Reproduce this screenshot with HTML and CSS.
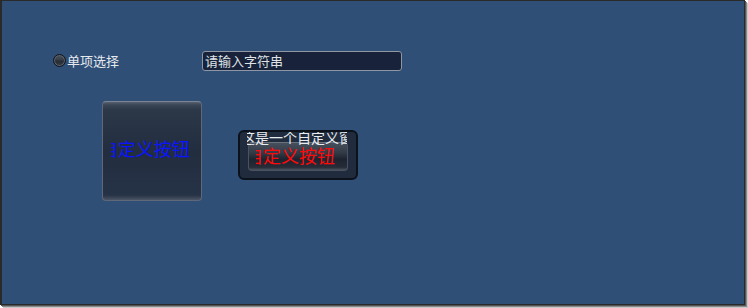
FILE: index.html
```html
<!DOCTYPE html>
<html lang="zh">
<head>
<meta charset="utf-8">
<link rel="stylesheet" href="styles.css">
</head>
<body>
<div class="window">
  <div class="row1">
    <label class="radio-group">
      <span class="radio"></span>
      <span class="radio-label">单项选择</span>
    </label>
    <div class="input"><span class="input-text">请输入字符串</span></div>
  </div>
  <div class="row2">
    <div class="btn1">
      <span class="clip1"><span class="clip1-text">自定义按钮</span></span>
    </div>
    <div class="win2">
      <div class="win2-title"><span class="win2-title-text">这是一个自定义窗口</span></div>
      <div class="btn2">
        <span class="clip2"><span class="clip2-text">自定义按钮</span></span>
      </div>
    </div>
  </div>
</div>
</body>
</html>
```
FILE: styles.css
```css
html, body {
  margin: 0;
  padding: 0;
  background: #ffffff;
}
body {
  font-family: "Noto Sans CJK SC", "Noto Sans", sans-serif;
  width: 748px;
  height: 308px;
  overflow: hidden;
}
.window {
  box-sizing: border-box;
  width: 745px;
  height: 305px;
  background: #2f4f77;
  border-top: 1px solid #2a2a2a;
  border-left: 2px solid #2a2a2a;
  border-right: 1px solid #2a2a2a;
  border-bottom: 1px solid #2a2a2a;
  box-shadow: 1px 1px 0 #555555, 2px 2px 0 #8a8a8a, 3px 3px 0 #c8c8c8;
}
.row1 {
  display: flex;
  align-items: center;
  height: 19px;
  margin-top: 50px;
  padding-left: 51px;
}
.radio-group {
  display: flex;
  align-items: center;
  width: 149px;
}
.radio {
  box-sizing: border-box;
  width: 13px;
  height: 13px;
  border-radius: 50%;
  border: 1px solid #10151d;
  background: linear-gradient(#4c535d 0%, #363c45 45%, #272c34 55%, #343a43 100%);
  box-shadow: inset 0 0 0 1px #5a616b;
}
.radio-label {
  margin-left: 1px;
  font-size: 13px;
  line-height: 19px;
  color: #e6e9ee;
}
.input {
  box-sizing: border-box;
  width: 200px;
  height: 20px;
  border: 1px solid #8e97a3;
  border-radius: 3px;
  background: #18223a;
  padding-left: 2px;
  display: flex;
  align-items: center;
}
.input-text {
  font-size: 13px;
  line-height: 18px;
  color: #dfe2e7;
}
.row2 {
  display: flex;
  align-items: flex-start;
  margin-top: 31px;
  padding-left: 100px;
}
.btn1 {
  box-sizing: border-box;
  width: 100px;
  height: 100px;
  border: 1px solid #5e6878;
  border-top-color: #7a8494;
  border-radius: 4px;
  background: linear-gradient(#56606e 0px, #3a4556 3px, #2c3748 8px, #222d3f 50%, #263246 95%, #4a5464 100%);
  display: flex;
  align-items: center;
  padding-left: 8px;
  padding-bottom: 6px;
}
.clip1 {
  display: block;
  width: 82px;
  overflow: hidden;
  white-space: nowrap;
}
.clip1-text {
  display: block;
  margin-left: -11px;
  font-size: 18px;
  line-height: 22px;
  color: #0a14ff;
}
.win2 {
  box-sizing: border-box;
  width: 120px;
  height: 50px;
  margin-left: 36px;
  margin-top: 29px;
  border: 2px solid #0c121c;
  border-radius: 6px;
  background: #202c3e;
}
.win2-title {
  position: relative;
  z-index: 1;
  width: 100px;
  height: 15px;
  margin-left: 7px;
  overflow: hidden;
  white-space: nowrap;
}
.win2-title-text {
  display: block;
  margin-top: -3px;
  margin-left: -6px;
  font-size: 14px;
  line-height: 17px;
  color: #e8ebef;
}
.btn2 {
  box-sizing: border-box;
  width: 100px;
  height: 29px;
  margin-left: 8px;
  margin-top: -5px;
  border: 1px solid #4a5260;
  border-top-color: #6a7280;
  border-radius: 4px;
  background: linear-gradient(rgba(80,88,100,0.8) 0px, rgba(52,60,72,0.95) 35%, #1d2430 60%, #262d38 90%, #4a525e 100%);
  display: flex;
  align-items: center;
  padding-left: 7px;
  padding-bottom: 3px;
}
.clip2 {
  display: block;
  width: 86px;
  overflow: hidden;
  white-space: nowrap;
}
.clip2-text {
  display: block;
  margin-left: -11px;
  font-size: 18px;
  line-height: 22px;
  color: #ff0a0a;
}
```
